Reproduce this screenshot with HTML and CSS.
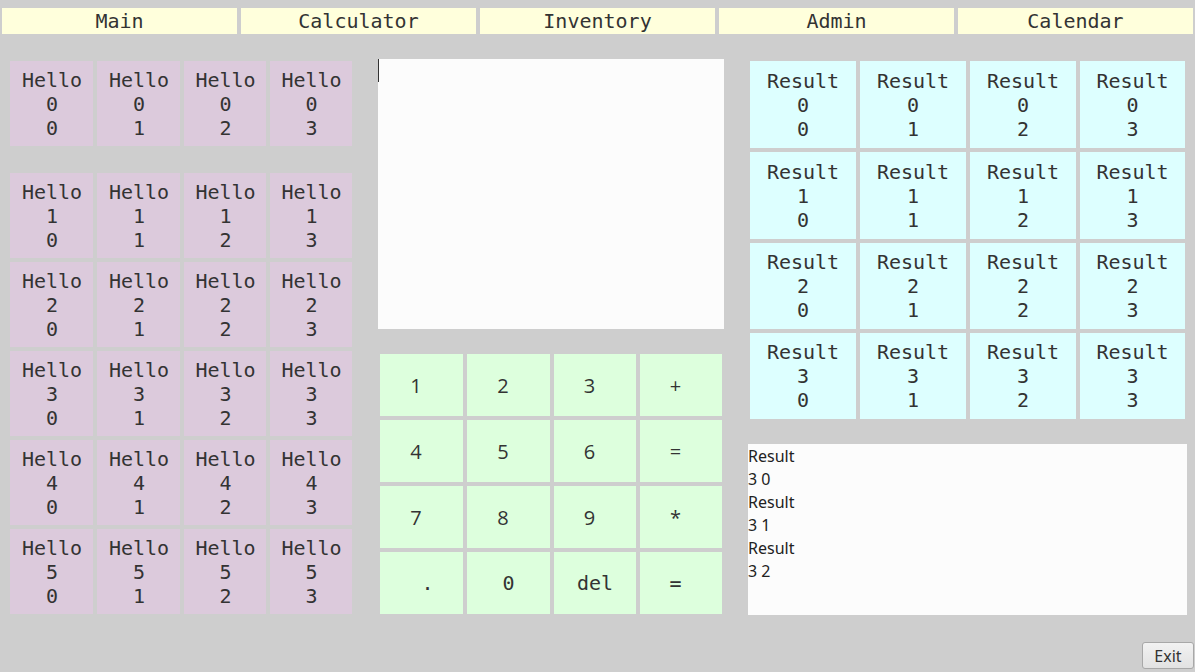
FILE: index.html
```html
<!DOCTYPE html>
<html>
<head>
<meta charset="utf-8">
<link rel="stylesheet" href="styles.css">
</head>
<body>
<nav class="tabs">
  <div class="tab">Main</div>
  <div class="tab">Calculator</div>
  <div class="tab">Inventory</div>
  <div class="tab">Admin</div>
  <div class="tab">Calendar</div>
</nav>
<main class="content">
  <section class="left">
    <div class="hello-row">
      <div class="hello">Hello<br>0<br>0</div>
      <div class="hello">Hello<br>0<br>1</div>
      <div class="hello">Hello<br>0<br>2</div>
      <div class="hello">Hello<br>0<br>3</div>
    </div>
    <div class="hello-grid">
      <div class="hello">Hello<br>1<br>0</div><div class="hello">Hello<br>1<br>1</div><div class="hello">Hello<br>1<br>2</div><div class="hello">Hello<br>1<br>3</div>
      <div class="hello">Hello<br>2<br>0</div><div class="hello">Hello<br>2<br>1</div><div class="hello">Hello<br>2<br>2</div><div class="hello">Hello<br>2<br>3</div>
      <div class="hello">Hello<br>3<br>0</div><div class="hello">Hello<br>3<br>1</div><div class="hello">Hello<br>3<br>2</div><div class="hello">Hello<br>3<br>3</div>
      <div class="hello">Hello<br>4<br>0</div><div class="hello">Hello<br>4<br>1</div><div class="hello">Hello<br>4<br>2</div><div class="hello">Hello<br>4<br>3</div>
      <div class="hello">Hello<br>5<br>0</div><div class="hello">Hello<br>5<br>1</div><div class="hello">Hello<br>5<br>2</div><div class="hello">Hello<br>5<br>3</div>
    </div>
  </section>
  <section class="middle">
    <div class="editor"><textarea class="input"></textarea></div>
    <div class="keypad">
      <div class="key shift">1</div><div class="key shift">2</div><div class="key shift">3</div><div class="key shift">+</div>
      <div class="key shift">4</div><div class="key shift">5</div><div class="key shift">6</div><div class="key shift">=</div>
      <div class="key shift">7</div><div class="key shift">8</div><div class="key shift">9</div><div class="key shift">*</div>
      <div class="key mono">&nbsp;.</div><div class="key mono">0</div><div class="key mono">del</div><div class="key mono shift">=</div>
    </div>
  </section>
  <section class="right">
    <div class="result-grid">
      <div class="result">Result<br>0<br>0</div><div class="result">Result<br>0<br>1</div><div class="result">Result<br>0<br>2</div><div class="result">Result<br>0<br>3</div>
      <div class="result">Result<br>1<br>0</div><div class="result">Result<br>1<br>1</div><div class="result">Result<br>1<br>2</div><div class="result">Result<br>1<br>3</div>
      <div class="result">Result<br>2<br>0</div><div class="result">Result<br>2<br>1</div><div class="result">Result<br>2<br>2</div><div class="result">Result<br>2<br>3</div>
      <div class="result">Result<br>3<br>0</div><div class="result">Result<br>3<br>1</div><div class="result">Result<br>3<br>2</div><div class="result">Result<br>3<br>3</div>
    </div>
    <div class="log">
      <div>Result</div><div>3 0</div>
      <div>Result</div><div>3 1</div>
      <div>Result</div><div>3 2</div>
    </div>
  </section>
</main>
<footer class="footer">
  <button class="exit">Exit</button>
</footer>
</body>
</html>
```
FILE: styles.css
```css
html, body {
  margin: 0;
  padding: 0;
  background: #cecece;
  color: #333;
  font-family: "DejaVu Sans Mono", monospace;
}
body {
  width: 1195px;
  height: 672px;
  overflow: hidden;
}
.tabs {
  display: flex;
  gap: 4px;
  padding: 8px 2px 0 2px;
}
.tab {
  width: 235px;
  height: 26px;
  background: #ffffdc;
  font-size: 20px;
  line-height: 26px;
  text-align: center;
}
.content {
  display: flex;
  padding: 25px 0 0 10px;
  height: 556px;
}
.left {
  width: 342px;
  padding-top: 2px;
}
.hello-row, .hello-grid {
  display: grid;
  grid-template-columns: 83px 83px 82px 82px;
  column-gap: 4px;
}
.hello-row {
  grid-template-rows: 85px;
  margin-bottom: 27px;
}
.hello-grid {
  grid-template-rows: repeat(5, 85px);
  row-gap: 4px;
}
.hello {
  background: #dccadc;
  font-size: 20px;
  line-height: 24px;
  text-align: center;
  padding-left: 1px;
  display: flex;
  align-items: center;
  justify-content: center;
}
.middle {
  width: 346px;
  margin-left: 26px;
  display: flex;
  flex-direction: column;
}
.editor {
  position: relative;
  width: 346px;
  height: 270px;
}
.editor::before {
  content: "";
  position: absolute;
  left: 0;
  top: 0;
  width: 1px;
  height: 23px;
  background: #333;
}
.input {
  display: block;
  width: 346px;
  height: 270px;
  margin: 0;
  padding: 0;
  border: none;
  outline: none;
  resize: none;
  background: #fcfcfc;
}
.keypad {
  margin: 25px 0 0 2px;
  display: grid;
  grid-template-columns: 83px 83px 82px 82px;
  grid-template-rows: repeat(4, 62px);
  gap: 4px;
}
.key {
  background: #ddffdd;
  font-family: "Open Sans", "Noto Sans", sans-serif;
  font-size: 20px;
  display: flex;
  align-items: center;
  justify-content: center;
}
.key.shift {
  padding-right: 11px;
}
.key.mono {
  font-family: "DejaVu Sans Mono", monospace;
}
.right {
  width: 439px;
  margin-left: 24px;
  display: flex;
  flex-direction: column;
}
.result-grid {
  margin: 2px 2px 0 2px;
  display: grid;
  grid-template-columns: 106px 106px 106px 105px;
  grid-template-rows: 87px 87px 86px 86px;
  gap: 4px;
}
.result {
  background: #ddffff;
  font-size: 20px;
  line-height: 24px;
  text-align: center;
  display: flex;
  align-items: center;
  justify-content: center;
}
.log {
  margin-top: 25px;
  height: 170px;
  padding-top: 1px;
  background: #fcfcfc;
  font-family: "Noto Sans", "Open Sans", sans-serif;
  font-size: 16px;
  line-height: 23px;
  color: #222;
}
.footer {
  display: flex;
  justify-content: flex-end;
  padding: 0 1px 0 0;
  margin-top: 27px;
}
.exit {
  width: 52px;
  height: 27px;
  padding: 0;
  font-family: "Noto Sans", "Open Sans", sans-serif;
  font-size: 16px;
  color: #333;
  background: linear-gradient(#f2f2f2, #e2e2e2);
  border: 1px solid #a8a8a8;
  border-radius: 3px;
}
```
